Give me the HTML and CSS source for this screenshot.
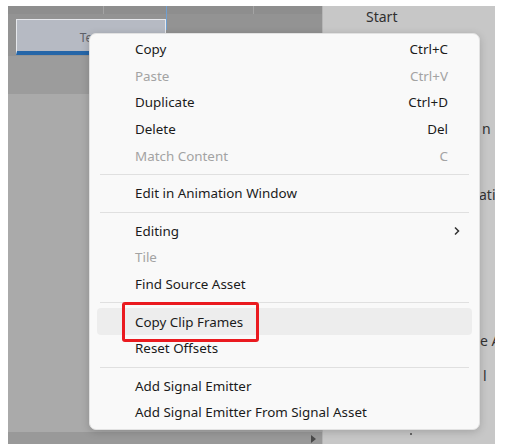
FILE: index.html
```html
<!DOCTYPE html>
<html>
<head>
<meta charset="utf-8">
<link rel="stylesheet" href="styles.css">
</head>
<body>
<div class="frame">
  <div class="timeline">
    <div class="ruler">
      <span class="tick t1"></span>
      <span class="tick t2"></span>
      <span class="tick t3"></span>
    </div>
    <div class="track">
      <div class="clip"><span class="clip-name">Test</span></div>
      <div class="track-rest"></div>
    </div>
    <div class="band"></div>
    <div class="area"></div>
    <div class="bottom"><span class="arrow"></span></div>
  </div>
  <div class="inspector">
    <div class="ins-title">Start</div>
    <div class="ins-row r1">n</div>
    <div class="ins-row r2">ati</div>
    <div class="ins-row r3">e A</div>
    <div class="ins-row r4">l</div>
    <div class="ins-foot"><span class="dot"></span></div>
  </div>
</div>

<div class="menu">
  <div class="item"><span class="label">Copy</span><span class="key">Ctrl+C</span></div>
  <div class="item disabled"><span class="label">Paste</span><span class="key">Ctrl+V</span></div>
  <div class="item"><span class="label">Duplicate</span><span class="key">Ctrl+D</span></div>
  <div class="item"><span class="label">Delete</span><span class="key">Del</span></div>
  <div class="item disabled"><span class="label">Match Content</span><span class="key">C</span></div>
  <div class="sep"></div>
  <div class="item"><span class="label">Edit in Animation Window</span></div>
  <div class="sep"></div>
  <div class="item"><span class="label">Editing</span><svg class="chev" width="8" height="10" viewBox="0 0 8 10"><path d="M2 1.5 L5.5 5 L2 8.5" fill="none" stroke="#333" stroke-width="1.5"/></svg></div>
  <div class="item disabled"><span class="label">Tile</span></div>
  <div class="item"><span class="label">Find Source Asset</span></div>
  <div class="sep"></div>
  <div class="item hover"><span class="label">Copy Clip Frames</span></div>
  <div class="item"><span class="label">Reset Offsets</span></div>
  <div class="sep"></div>
  <div class="item"><span class="label">Add Signal Emitter</span></div>
  <div class="item"><span class="label">Add Signal Emitter From Signal Asset</span></div>
</div>
<div class="callout"></div>
</body>
</html>
```

FILE: styles.css
```css
* { box-sizing: border-box; }
html, body { margin: 0; padding: 0; background: #ffffff; }
body {
  width: 507px;
  height: 444px;
  overflow: hidden;
  position: relative;
  font-family: "Noto Sans", "Open Sans", sans-serif;
  font-size: 13.4px;
  color: #1b1b1b;
}
.frame {
  margin: 6px 0 0 8px;
  width: 487px;
  height: 438px;
  display: flex;
}
.timeline {
  width: 314px;
  display: flex;
  flex-direction: column;
  background: #aaaaaa;
}
.ruler {
  height: 8px;
  background: #8e8e8e;
  position: relative;
}
.tick {
  position: absolute;
  top: 0;
  width: 1px;
  height: 8px;
  background: #a4a4a4;
}
.t1 { left: 95px; }
.t2 { left: 158px; background: #6f9fd0; height: 24px; z-index: 2; }
.t3 { left: 245px; }
.track {
  height: 42px;
  display: flex;
  align-items: flex-start;
  background: #939393;
  padding: 5px 0 0 8px;
}
.clip {
  width: 150px;
  height: 36px;
  background: #b6bac3;
  border: 1px solid #e6e8ec;
  border-bottom: 4px solid #2566a8;
  display: flex;
  align-items: center;
  justify-content: center;
  color: #5d6068;
  font-size: 12px;
  padding-top: 3px;
}
.track-rest { flex: 1; }
.band {
  height: 38px;
  background: #9c9c9c;
}
.area { flex: 1; background: #aaaaaa; }
.bottom {
  height: 12px;
  background: #999999;
  position: relative;
}
.arrow {
  position: absolute;
  right: 6px;
  top: 3px;
  width: 0; height: 0;
  border-left: 5px solid #4a4a4a;
  border-top: 4px solid transparent;
  border-bottom: 4px solid transparent;
}
.inspector {
  flex: 1;
  background: #c7c7c7;
  border-left: 1px solid #b5b5b5;
  display: flex;
  flex-direction: column;
  overflow: hidden;
  color: #2e2e2e;
  font-size: 14px;
}
.ins-title {
  height: 24px;
  line-height: 22px;
  padding-left: 43px;
  font-size: 14px;
  color: #303030;
}
.ins-row {
  white-space: nowrap;
  padding-left: 159px;
  line-height: 18px;
  color: #333;
}
.r1 { margin-top: 90px; }
.r2 { margin-top: 48px; padding-left: 156px; }
.r3 { margin-top: 128px; padding-left: 157px; }
.r4 { margin-top: 17px; padding-left: 160px; }
.ins-foot { flex: 1; position: relative; }
.dot {
  position: absolute;
  left: 87px;
  bottom: 9px;
  width: 2px; height: 2px;
  background: #666;
}
.menu {
  position: absolute;
  left: 89px;
  top: 33px;
  width: 391px;
  padding: 2px 7px 3px;
  background: #f9f9f9;
  border: 1px solid #e2e2e2;
  border-radius: 7px;
  box-shadow: 0 2px 8px rgba(0,0,0,0.18);
  z-index: 5;
}
.item {
  height: 26.6px;
  display: flex;
  align-items: center;
  padding: 0 24px 0 38px;
  border-radius: 4px;
  white-space: nowrap;
}
.item .label { flex: 1; }
.item .key { color: #1b1b1b; }
.item.disabled .label, .item.disabled .key { color: #a3a3a3; }
.item.hover { background: #ededed; }
.chev { margin-right: -13px; }
.sep {
  height: 1px;
  margin: 5px 3px;
  background: #e0e0e0;
}
.callout {
  position: absolute;
  left: 122px;
  top: 302px;
  width: 137px;
  height: 40px;
  border: 3px solid #ea1a1f;
  border-radius: 3px;
  z-index: 6;
}
```
